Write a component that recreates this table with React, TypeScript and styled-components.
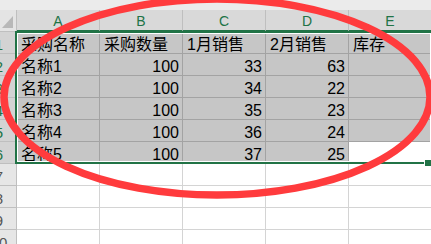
import React from "react";
import styled, { createGlobalStyle } from "styled-components";

const GlobalStyle = createGlobalStyle`
  html, body {
    margin: 0;
    padding: 0;
    background: #ffffff;
    overflow: hidden;
  }
`;

const columns = ["A", "B", "C", "D", "E"];

type Row = string[];

const rows: Row[] = [
  ["采购名称", "采购数量", "1月销售", "2月销售", "库存"],
  ["名称1", "100", "33", "63", ""],
  ["名称2", "100", "34", "22", ""],
  ["名称3", "100", "35", "23", ""],
  ["名称4", "100", "36", "24", ""],
  ["名称5", "100", "37", "25", ""],
];

const emptyRows = [7, 8, 9, 10];

const isNumber = (v: string) => /^\d+$/.test(v);

export default function App() {
  return (
    <>
      <GlobalStyle />
      <Page>
        <TopStrip />
        <Sheet>
          <CornerCell />
          {columns.map((c) => (
            <ColHead key={c}>{c}</ColHead>
          ))}

          {rows.map((row, r) => (
            <React.Fragment key={r}>
              <RowHead $selected>{r + 1}</RowHead>
              {row.map((value, c) => (
                <Cell
                  key={c}
                  $selected
                  $active={r === rows.length - 1 && c === columns.length - 1}
                  $right={isNumber(value)}
                >
                  {value}
                </Cell>
              ))}
            </React.Fragment>
          ))}

          {emptyRows.map((n) => (
            <React.Fragment key={n}>
              <RowHead>{n}</RowHead>
              {columns.map((c) => (
                <Cell key={c} />
              ))}
            </React.Fragment>
          ))}
        </Sheet>

        <Selection>
          <FillHandle />
        </Selection>

        <Marker viewBox="0 0 431 244" width="431" height="244">
          <ellipse
            cx="217"
            cy="97"
            rx="213"
            ry="98"
            fill="none"
            stroke="#ff3b3d"
            strokeWidth="7.5"
          />
        </Marker>
      </Page>
    </>
  );
}

const Page = styled.div`
  position: relative;
  width: 431px;
  height: 244px;
  overflow: hidden;
  font-family: "Liberation Sans", "Noto Sans CJK SC", sans-serif;
`;

const TopStrip = styled.div`
  height: 10px;
  background: #ebebeb;
`;

const Sheet = styled.div`
  display: grid;
  grid-template-columns: 35px repeat(5, 83px);
  grid-auto-rows: 22px;
  margin-left: -18px;
  width: 450px;
`;

const HeadBase = styled.div`
  box-sizing: border-box;
  border-right: 1px solid #bfbfbf;
  border-bottom: 1px solid #bfbfbf;
  font-size: 14px;
  text-align: center;
  overflow: hidden;
  white-space: nowrap;
`;

const CornerCell = styled(HeadBase)`
  position: relative;
  background: #e4e4e4;

  &::after {
    content: "";
    position: absolute;
    right: 3px;
    bottom: 3px;
    width: 11px;
    height: 12px;
    background: #b8b8b8;
    clip-path: polygon(100% 0, 100% 100%, 0 100%);
  }
`;

const ColHead = styled(HeadBase)`
  background: #d9d9d9;
  color: #217346;
  padding-top: 2px;
  line-height: 19px;
  border-bottom: 2px solid #217346;
`;

const RowHead = styled(HeadBase)<{ $selected?: boolean }>`
  background: ${(p) => (p.$selected ? "#d3d3d3" : "#e6e6e6")};
  color: ${(p) => (p.$selected ? "#217346" : "#555555")};
  font-size: 15px;
  padding-top: 4px;
  line-height: 17px;
`;

const Cell = styled.div<{ $selected?: boolean; $active?: boolean; $right?: boolean }>`
  box-sizing: border-box;
  padding: 4px ${(p) => (p.$right ? "3px" : "4px")} 0;
  line-height: 17px;
  font-size: 16px;
  color: #000000;
  text-align: ${(p) => (p.$right ? "right" : "left")};
  white-space: nowrap;
  overflow: hidden;
  background: ${(p) => (p.$selected && !p.$active ? "#c6c6c6" : "#ffffff")};
  border-right: 1px solid ${(p) => (p.$selected ? "#a3a3a3" : "#d4d4d4")};
  border-bottom: 1px solid ${(p) => (p.$selected ? "#a3a3a3" : "#d4d4d4")};
`;

// range outline drawn over the grid, right edge runs past the view
const Selection = styled.div`
  position: absolute;
  left: 15px;
  top: 31px;
  width: 418px;
  height: 133px;
  box-sizing: border-box;
  border: 2px solid #217346;
  box-shadow: inset 0 0 0 1px #ffffff;
  pointer-events: none;
`;

const FillHandle = styled.div`
  position: absolute;
  right: -1px;
  bottom: -5px;
  width: 6px;
  height: 6px;
  background: #217346;
  border: 1px solid #ffffff;
`;

const Marker = styled.svg`
  position: absolute;
  left: 0;
  top: 0;
  pointer-events: none;
`;
